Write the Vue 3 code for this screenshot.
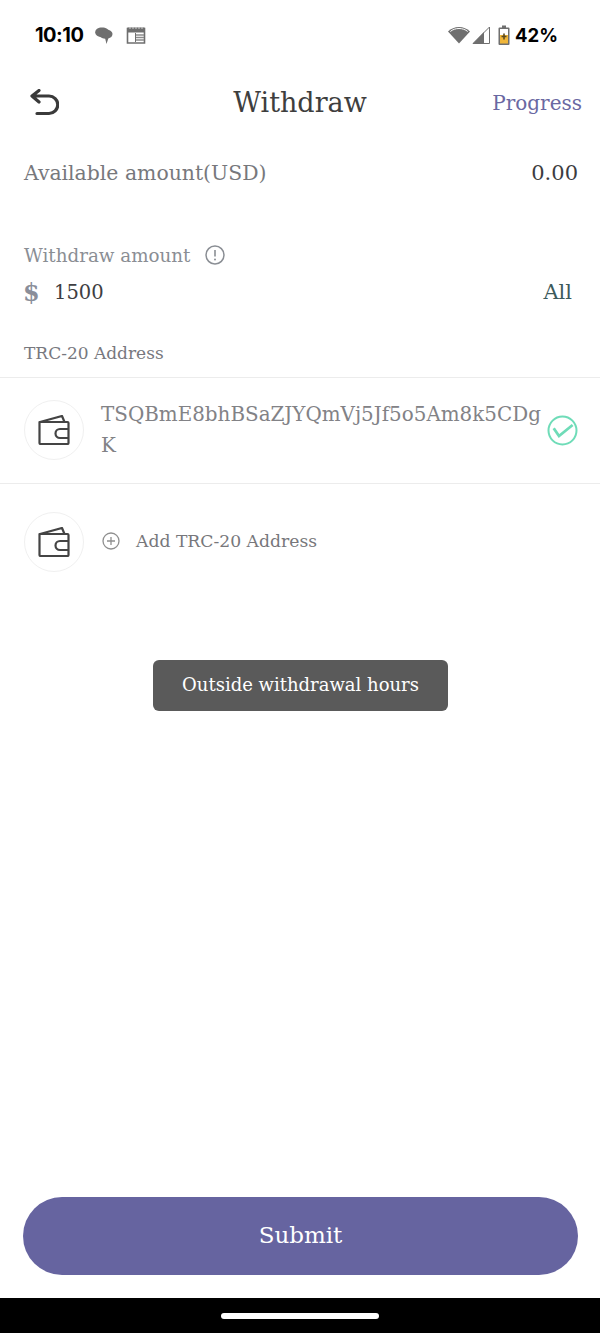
<template>
  <div class="page">
    <div class="status">
      <span class="time">10:10</span>
      <svg class="s-msg" width="20" height="20" viewBox="0 0 20 20"><path d="M8 2.500c4 0 7 2 7 4.800s-3 4.800-7 4.800c-4 0-6.800-2-6.800-4.800S4 2.500 8 2.500z" fill="#6f6f6f"/><path d="M11.500 4.500c4 0 7 1.800 7 4.500 0 2.300-1.700 3.900-4.200 4.500L12.500 19l-1.300-5.200C7.500 13.500 5 11.500 5 9c0-2.700 2.500-4.500 6.500-4.500z" fill="#6f6f6f"/></svg>
      <svg class="s-cal" width="20" height="18" viewBox="0 0 20 18"><path d="M1.500 2.500h17v14.500h-17z" fill="none" stroke="#6f6f6f" stroke-width="1.600"/><path d="M1.500 1.500h17v5h-17z" fill="#6f6f6f"/><path d="M4 1.500v1.200M7 1.500v1.200M10 1.500v1.200M13 1.500v1.200M16 1.500v1.200" stroke="#fff" stroke-width="1"/><path d="M10 9h8M10 11.500h8M10 14h8" stroke="#8a8a8a" stroke-width="1.500"/><path d="M9.500 7v9" stroke="#6f6f6f" stroke-width="1"/></svg>
      <span class="grow"></span>
      <svg width="22" height="18" viewBox="0 0 22 18"><path d="M11 17.500 0 5.500C3 2.700 6.800 1 11 1s8 1.700 11 4.500z" fill="#6f6f6f"/><path d="M2.300 5.500C4.700 3.500 7.700 2.500 11 2.500s6.300 1 8.700 3" fill="none" stroke="#fff" stroke-width="1"/></svg>
      <svg class="s-sig" width="18" height="18" viewBox="0 0 18 18"><path d="M17.500 1v16.500H1z" fill="#fff" stroke="#6f6f6f" stroke-width="1"/><path d="M12 6v11.500H1z" fill="#6f6f6f"/></svg>
      <svg class="s-bat" width="12" height="20" viewBox="0 0 12 20"><path d="M4 .5h4v2h2.500a1 1 0 0 1 1 1V19a1 1 0 0 1-1 1h-9a1 1 0 0 1-1-1V3.500a1 1 0 0 1 1-1H4z" fill="#6f6f6f"/><path d="M2 4h8v6H2z" fill="#fff"/><path d="M2 10h8v8.500H2z" fill="#f0b63a"/><path d="M6 8.500v6M3.500 11.500h5" stroke="#5a4a20" stroke-width="1.600"/></svg>
      <span class="batt">42%</span>
    </div>

    <header class="nav">
      <svg class="back" width="30" height="30" viewBox="0 0 30 30"><path d="M10 1.500 3 7l7 6M3.500 7H20a8.700 8.700 0 0 1 0 17.500H8" fill="none" stroke="#3a3a3a" stroke-width="3.200" stroke-linecap="round" stroke-linejoin="round"/></svg>
      <h1 class="title">Withdraw</h1>
      <span class="progress">Progress</span>
    </header>

    <div class="avail">
      <span>Available amount(USD)</span>
      <span class="zero">0.00</span>
    </div>

    <div class="amount-label">
      <span>Withdraw amount</span>
      <svg width="20" height="20" viewBox="0 0 20 20"><circle cx="10" cy="10" r="9" fill="none" stroke="#8a8e94" stroke-width="1.500"/><path d="M10 5v6.500" stroke="#8a8e94" stroke-width="1.600"/><circle cx="10" cy="14.500" r="1" fill="#8a8e94"/></svg>
    </div>
    <div class="amount">
      <span class="dollar">$</span>
      <span class="value">1500</span>
      <span class="all">All</span>
    </div>

    <div class="addr-label">TRC-20 Address</div>

    <div class="row first">
      <span class="coin">
        <svg width="32" height="30" viewBox="0 0 32 30"><path d="M2 7 24 1l2.500 6" fill="none" stroke="#444" stroke-width="2.200" stroke-linejoin="round"/><path d="M1.500 7h28a1 1 0 0 1 1 1v20a1 1 0 0 1-1 1h-27a1 1 0 0 1-1-1z" fill="#fff" stroke="#444" stroke-width="2.200" stroke-linejoin="round"/><path d="M30.500 14h-8.500a4.500 4.500 0 0 0 0 9h8.500" fill="none" stroke="#444" stroke-width="2.200"/></svg>
      </span>
      <span class="address">TSQBmE8bhBSaZJYQmVj5Jf5o5Am8k5CDg<br>K</span>
      <svg class="check" width="31" height="31" viewBox="0 0 31 31"><circle cx="15.500" cy="15.500" r="14" fill="none" stroke="#6fdcb8" stroke-width="2"/><path d="M6.700 13.300 12 21 25.600 10" fill="none" stroke="#6fdcb8" stroke-width="2.800"/></svg>
    </div>

    <div class="row add">
      <span class="coin">
        <svg width="32" height="30" viewBox="0 0 32 30"><path d="M2 7 24 1l2.500 6" fill="none" stroke="#444" stroke-width="2.200" stroke-linejoin="round"/><path d="M1.500 7h28a1 1 0 0 1 1 1v20a1 1 0 0 1-1 1h-27a1 1 0 0 1-1-1z" fill="#fff" stroke="#444" stroke-width="2.200" stroke-linejoin="round"/><path d="M30.500 14h-8.500a4.500 4.500 0 0 0 0 9h8.500" fill="none" stroke="#444" stroke-width="2.200"/></svg>
      </span>
      <svg class="plus" width="18" height="18" viewBox="0 0 18 18"><circle cx="9" cy="9" r="8" fill="none" stroke="#8f8f8f" stroke-width="1.300"/><path d="M9 5v8M5 9h8" stroke="#8f8f8f" stroke-width="1.300"/></svg>
      <span class="add-text">Add TRC-20 Address</span>
    </div>

    <div class="toast">Outside withdrawal hours</div>

    <div class="grow"></div>
    <button class="submit">Submit</button>
    <div class="navbar"><span class="pill"></span></div>
  </div>
</template>

<script setup>
</script>

<style>
html, body { margin: 0; background: #fff; }
</style>

<style scoped>
.page {
  position: relative;
  width: 600px;
  height: 1333px;
  display: flex;
  flex-direction: column;
  overflow: hidden;
  background: #fff;
  font-family: "DejaVu Serif", "Liberation Serif", serif;
}
.grow { flex: 1; }
.status {
  height: 70px;
  display: flex;
  align-items: center;
  padding: 0 42px 0 35px;
  box-sizing: border-box;
  font-family: Inter, "Noto Sans", sans-serif;
  font-weight: 700;
  color: #000;
}
.time { font-size: 20px; letter-spacing: -0.5px; }
.s-msg { margin-left: 11px; }
.s-cal { margin-left: 12px; }
.s-sig { margin-left: 2px; }
.s-bat { margin-left: 8px; }
.batt { font-size: 18.5px; margin-left: 5px; }
.nav {
  height: 66px;
  position: relative;
  display: flex;
  align-items: center;
  justify-content: space-between;
  padding: 0 18px 0 29px;
}
.back { margin-top: 2px; }
.title {
  position: absolute;
  left: 0;
  right: 0;
  margin: 0;
  padding-bottom: 2px;
  text-align: center;
  font-size: 27px;
  font-weight: 400;
  color: #3e3e3e;
}
.progress { font-size: 20px; color: #6a68a2; }
.avail {
  display: flex;
  justify-content: space-between;
  align-items: center;
  height: 74px;
  padding: 0 22px 0 24px;
  box-sizing: border-box;
  font-size: 20.4px;
  color: #77787c;
}
.zero { color: #3c3c40; font-size: 21px; }
.amount-label {
  display: flex;
  align-items: center;
  gap: 15px;
  margin: 30px 0 0 24px;
  height: 30px;
  font-size: 18.3px;
  color: #8a8e94;
}
.amount {
  display: flex;
  align-items: center;
  height: 44px;
  padding: 0 28px 0 23px;
}
.dollar { font-size: 24px; font-weight: 700; color: #8a8e9a; width: 31px; }
.value { font-size: 19.5px; color: #3e3e42; flex: 1; }
.all { font-size: 21px; color: #3c5a5c; }
.addr-label {
  margin: 21px 0 0 24px;
  height: 36px;
  display: flex;
  align-items: center;
  font-size: 17px;
  color: #77787e;
}
.row {
  display: flex;
  align-items: center;
  padding-left: 24px;
  box-sizing: border-box;
  border-top: 1px solid #ececec;
}
.first { height: 106px; margin-top: 6px; padding-bottom: 1px; }
.add { height: 116px; }
.coin {
  width: 58px;
  height: 58px;
  border: 1px solid #f0f0f0;
  border-radius: 50%;
  display: flex;
  align-items: center;
  justify-content: center;
  flex: none;
}
.address {
  margin-left: 17px;
  font-size: 19.9px;
  line-height: 31px;
  color: #828286;
  white-space: nowrap;
  width: 444px;
}
.check { flex: none; margin-left: 2px; }
.plus { margin: 0 0 2px 18px; }
.add-text { margin-left: 16px; padding-bottom: 2px; font-size: 17.2px; color: #77777b; }
.toast {
  position: absolute;
  left: 153px;
  top: 660px;
  width: 295px;
  height: 51px;
  padding-bottom: 2px;
  box-sizing: border-box;
  border-radius: 6px;
  background: #5a5a5a;
  color: #fff;
  font-size: 18px;
  display: flex;
  align-items: center;
  justify-content: center;
}
.submit {
  margin: 0 22px 23px 23px;
  height: 78px;
  padding: 0 0 2px;
  border: 0;
  border-radius: 39px;
  background: #6664a0;
  color: #fff;
  font-family: inherit;
  font-size: 23px;
}
.navbar {
  height: 35px;
  background: #000;
  display: flex;
  justify-content: center;
  align-items: center;
}
.pill {
  width: 158px;
  height: 6px;
  border-radius: 3px;
  background: #fff;
}
</style>
